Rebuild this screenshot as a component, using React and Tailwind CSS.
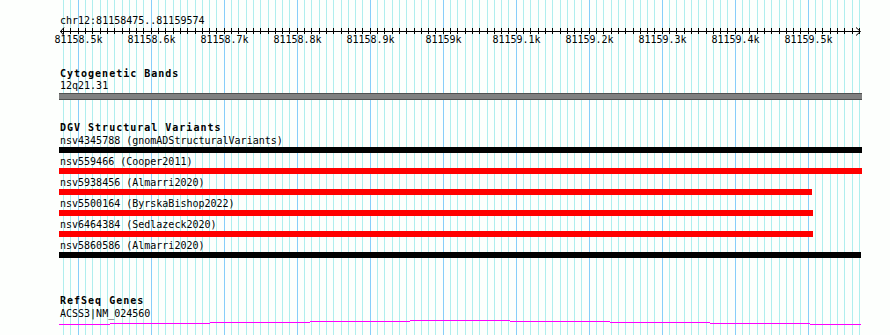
import React from "react";

const START = 81158475;
const grid = [];
for (let k = 0; k < 110; k++) {
  const bp = 81158480 + k * 10;
  grid.push({ x: Math.round(59.5 + (bp - START) * 0.73), major: bp % 100 === 0 });
}

const labels = [
  "81158.5k", "81158.6k", "81158.7k", "81158.8k", "81158.9k", "81159k",
  "81159.1k", "81159.2k", "81159.3k", "81159.4k", "81159.5k",
];

const variants = [
  { name: "nsv4345788 (gnomADStructuralVariants)", color: "bg-black", w: 803 },
  { name: "nsv559466 (Cooper2011)", color: "bg-[#ff0000]", w: 803 },
  { name: "nsv5938456 (Almarri2020)", color: "bg-[#ff0000]", w: 753 },
  { name: "nsv5500164 (ByrskaBishop2022)", color: "bg-[#ff0000]", w: 754 },
  { name: "nsv6464384 (Sedlazeck2020)", color: "bg-[#ff0000]", w: 754 },
  { name: "nsv5860586 (Almarri2020)", color: "bg-black", w: 802 },
];

const geneSegs = [
  [59, 110, 4], [110, 210, 3], [210, 310, 2], [310, 410, 1], [410, 510, 0],
  [510, 610, 1], [610, 710, 2], [710, 810, 3], [810, 861, 4],
];

function Title({ children, className = "" }) {
  return (
    <div className={"h-[12px] leading-[12px] text-[10px] font-bold tracking-[1px] pl-px whitespace-nowrap " + className}>
      {children}
    </div>
  );
}

function Label({ children, className = "" }) {
  return (
    <div className={"h-[12px] leading-[12px] text-[10px] pl-px whitespace-nowrap " + className}>
      {children}
    </div>
  );
}

export default function App() {
  return (
    <div className="relative w-[890px] h-[335px] overflow-hidden bg-[#fdfffd] text-black font-['DejaVu_Sans_Mono',monospace]">
      <svg className="absolute inset-0" width="890" height="335" shapeRendering="crispEdges">
        {grid.map((g, i) => (
          <rect key={i} x={g.x} y={0} width={1} height={335} fill={g.major ? "#87cefa" : "#afeeee"} />
        ))}
      </svg>

      <div className="relative flex flex-col pl-[59px] pt-[15px]">
        <Label>chr12:81158475..81159574</Label>

        <svg width="803" height="20" viewBox="59 0 803 20" className="block overflow-visible">
          <rect x={60} y={4} width={800} height={1} fill="#000" shapeRendering="crispEdges" />
          {grid.map((g, i) => (
            <rect key={i} x={g.x} y={1} width={1} height={6} fill="#000" shapeRendering="crispEdges" />
          ))}
          <polyline points="64,0.5 60.5,4.5 64,8.5" fill="none" stroke="#000" strokeWidth="1" />
          <polyline points="856,0.5 860.5,4.5 856,8.5" fill="none" stroke="#000" strokeWidth="1" />
          {labels.map((l, i) => (
            <text
              key={l}
              x={Math.round(59.5 + (25 + i * 100) * 0.73) + 0.5}
              y={16}
              textAnchor="middle"
              fontSize="10"
              fontFamily="'DejaVu Sans Mono', monospace"
              fill="#000"
            >
              {l}
            </text>
          ))}
        </svg>

        <Title className="mt-[21px]">Cytogenetic Bands</Title>
        <Label>12q21.31</Label>
        <div className="mt-px h-[7px] w-[803px] bg-[#808080] border-y border-[#505050]" />

        <Title className="mt-[22px]">DGV Structural Variants</Title>
        <div className="mt-px flex flex-col gap-[3px]">
          {variants.map((v) => (
            <div key={v.name} className="flex flex-col">
              <Label>{v.name}</Label>
              <div className={"h-[6px] " + v.color} style={{ width: v.w }} />
            </div>
          ))}
        </div>

        <Title className="mt-[37px]">RefSeq Genes</Title>
        <Label className="mt-px">ACSS3|NM_024560</Label>
        <svg width="803" height="6" viewBox="59 0 803 6" className="block" shapeRendering="crispEdges">
          {geneSegs.map(([a, b, y], i) => (
            <rect key={i} x={a} y={y} width={b - a} height={1} fill="#ff00ff" />
          ))}
        </svg>
      </div>
    </div>
  );
}
